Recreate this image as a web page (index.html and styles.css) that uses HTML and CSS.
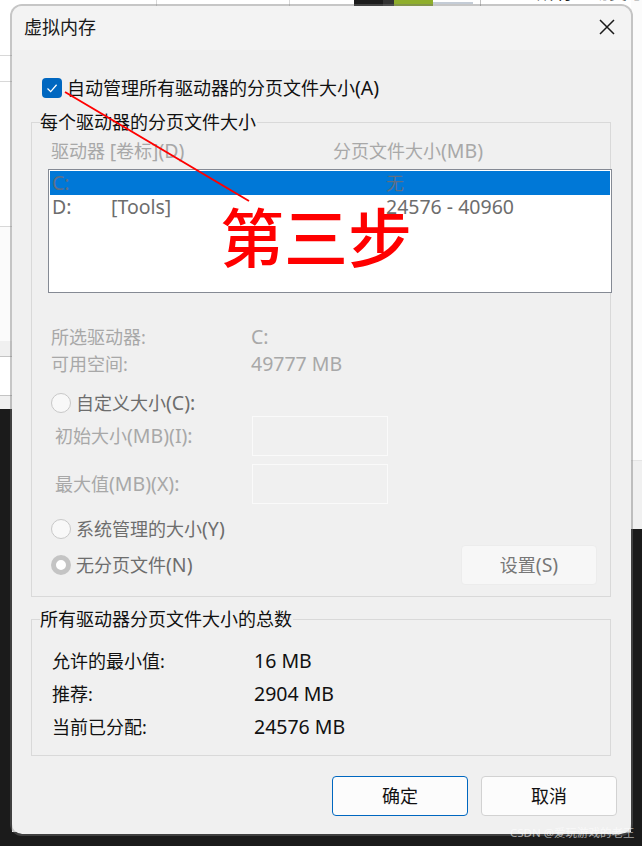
FILE: index.html
```html
<!DOCTYPE html>
<html lang="zh-CN">
<head>
<meta charset="utf-8">
<title>虚拟内存</title>
<link rel="stylesheet" href="styles.css">
</head>
<body>
<div class="desktop">
  <div class="bg left-light"></div>
  <div class="bg left-band1"></div>
  <div class="bg left-band2"></div>
  <div class="bg line-h l55"></div>
  <div class="bg line-h l81"></div>
  <div class="bg line-h l226"></div>
  <div class="bg line-h l356"></div>
  <div class="bg line-h l395"></div>
  <div class="bg line-v v156"></div>
  <div class="bg line-v v289"></div>
  <div class="bg line-v v480"></div>
  <div class="bg thumb-a"></div>
  <div class="bg thumb-b"></div>
  <div class="bg thumb-c"></div>
  <div class="bg thumb-d"></div>
  <div class="bg right-band"></div>
  <div class="bg dark-left"></div>
  <div class="bg dark-right"></div>
  <div class="bg dark-bottom"></div>
  <div class="bg top-text">所有驱动类总</div>

  <section class="window">
    <header class="titlebar">
      <span class="title">虚拟内存</span>
      <svg class="close" viewBox="0 0 16 16" width="16" height="16"><path d="M1 1L15 15M15 1L1 15"/></svg>
    </header>
    <div class="content">
      <div class="auto-row">
        <span class="checkbox"><svg viewBox="0 0 20 20" width="20" height="20"><path d="M5.5 10.5L8.7 13.6L14.6 6.8"/></svg></span>
        <span class="auto-label">自动管理所有驱动器的分页文件大小<span class="lat">(A)</span></span>
      </div>

      <div class="group group-drives">
        <span class="legend">每个驱动器的分页文件大小</span>
        <div class="list-head dim">
          <span class="col-drive">驱动器 <span class="lat">[</span>卷标<span class="lat">](D)</span></span>
          <span>分页文件大小<span class="lat">(MB)</span></span>
        </div>
        <div class="listbox">
          <div class="list-row selected"><span class="c1 lat">C:</span><span class="c2"></span><span>无</span></div>
          <div class="list-row"><span class="c1 lat">D:</span><span class="c2 lat">[Tools]</span><span class="lat">24576 - 40960</span></div>
        </div>
        <div class="info-row dim first"><span class="info-key">所选驱动器:</span><span class="lat">C:</span></div>
        <div class="info-row dim second"><span class="info-key">可用空间:</span><span class="lat">49777 MB</span></div>
        <div class="radio-row custom"><span class="radio"></span><span>自定义大小<span class="lat">(C):</span></span></div>
        <div class="input-row one dim"><span class="input-key">初始大小<span class="lat">(MB)(I):</span></span><span class="input"></span></div>
        <div class="input-row two dim"><span class="input-key">最大值<span class="lat">(MB)(X):</span></span><span class="input"></span></div>
        <div class="radio-row system"><span class="radio"></span><span>系统管理的大小<span class="lat">(Y)</span></span></div>
        <div class="radio-row none">
          <span class="radio on"></span><span>无分页文件<span class="lat">(N)</span></span>
          <span class="btn btn-set"><span>设置<span class="lat">(S)</span></span></span>
        </div>
      </div>

      <div class="group group-total">
        <span class="legend">所有驱动器分页文件大小的总数</span>
        <div class="total-row"><span class="total-key">允许的最小值:</span><span class="lat">16 MB</span></div>
        <div class="total-row"><span class="total-key">推荐:</span><span class="lat">2904 MB</span></div>
        <div class="total-row"><span class="total-key">当前已分配:</span><span class="lat">24576 MB</span></div>
      </div>

      <div class="actions">
        <span class="btn btn-main default">确定</span>
        <span class="btn btn-main">取消</span>
      </div>
    </div>
  </section>

  <svg class="annotation" viewBox="0 0 642 846" width="642" height="846"><line x1="65" y1="92" x2="249" y2="201"/></svg>
  <div class="step">第三步</div>
  <div class="watermark">CSDN @爱玩游戏的老王</div>
</div>
</body>
</html>
```

FILE: styles.css
```css
* { box-sizing: border-box; }
html, body { margin: 0; padding: 0; }
body {
  width: 642px;
  height: 846px;
  overflow: hidden;
  background: #fff;
  font-family: "Noto Sans", "Noto Sans CJK SC", sans-serif;
  font-size: 18px;
  color: #111;
}
.desktop { position: relative; width: 642px; height: 846px; overflow: hidden; background: #fff; }
.lat { font-size: 19.5px; line-height: 1; }

/* what shows behind the window */
.bg { position: absolute; }
.left-light { left: 0; top: 226px; width: 12px; height: 115px; background: #fbfbfb; }
.left-band1 { left: 0; top: 341px; width: 12px; height: 15px; background: #f0f0f0; }
.left-band2 { left: 0; top: 395px; width: 12px; height: 14px; background: #f0f0f0; }
.line-h { left: 0; width: 12px; height: 1px; background: #d8d8d8; }
.l55 { top: 55px; }
.l81 { top: 81px; }
.l226 { top: 226px; }
.l356 { top: 356px; background: #c4c4c4; }
.l395 { top: 395px; background: #c4c4c4; }
.line-v { top: 0; width: 1px; height: 6px; background: #d8d8d8; }
.v156 { left: 156px; }
.v289 { left: 289px; }
.v480 { left: 480px; background: #c0c0c0; }
.thumb-a { left: 354px; top: 0; width: 29px; height: 6px; background: #1c1c1c; }
.thumb-b { left: 383px; top: 0; width: 11px; height: 6px; background: #333; }
.thumb-c { left: 394px; top: 0; width: 39px; height: 6px; background: #8fae2c; }
.thumb-d { left: 433px; top: 2px; width: 40px; height: 2px; background: #c4ccd6; }
.right-band { left: 631px; top: 0; width: 11px; height: 461px; background: #fbfbfb; border-bottom: 1px solid #e4e4e4; }
.right-band::after { content: ""; position: absolute; left: 0; top: 461px; width: 11px; height: 68px; background: #f0f0f0; }
.dark-left { left: 0; top: 409px; width: 12px; height: 437px; background: #1b1b1b; }
.dark-right { left: 631px; top: 529px; width: 11px; height: 317px; background: #1b1b1b; }
.dark-bottom { left: 0; top: 832px; width: 642px; height: 14px; background: #1b1b1b; }
.top-text { left: 537px; top: -21px; width: 105px; height: 27px; line-height: 27px; overflow: hidden; white-space: nowrap; color: #222; }

/* the dialog */
.window {
  position: absolute;
  left: 10px;
  top: 4px;
  width: 623px;
  height: 832px;
  border: 2px solid rgba(118, 118, 118, 0.415);
  border-radius: 12px;
  background: #f0f0f0;
  background-clip: padding-box;
  overflow: hidden;
}
.titlebar {
  display: flex;
  align-items: center;
  justify-content: space-between;
  height: 44px;
  padding: 0 16px 2px 12px;
  background: #f3f3f3;
}
.title { font-size: 18px; line-height: 24px; color: #1a1a1a; }
.close { display: block; }
.close path { fill: none; stroke: #1a1a1a; stroke-width: 1.5; }
.content { padding: 0 20px 0 19px; }

.auto-row { display: flex; align-items: center; height: 24px; margin-top: 26px; margin-left: 11px; }
.checkbox {
  display: block;
  width: 20px;
  height: 20px;
  border-radius: 4px;
  background: #0067c0;
  margin-right: 5px;
}
.checkbox svg { display: block; }
.checkbox path { fill: none; stroke: #fff; stroke-width: 1.3; }
.auto-label { line-height: 24px; color: #111; }

.group { position: relative; width: 580px; border: 1px solid #d9d9d9; }
.legend {
  position: absolute;
  left: 8px;
  top: -13px;
  line-height: 24px;
  padding: 0 1px 0 0;
  background: #f0f0f0;
  color: #111;
}
.group-drives { height: 475px; margin-top: 22px; padding-top: 16px; }
.dim { color: #a8a8a8; }
.list-head { display: flex; height: 24px; line-height: 24px; padding-left: 19px; }
.col-drive { width: 282px; }
.listbox {
  width: 564px;
  height: 124px;
  margin: 6px 0 0 16px;
  padding: 1px;
  border: 1px solid #858a94;
  background: #fff;
  color: #6d6d6d;
}
.list-row { display: flex; height: 24px; line-height: 24px; padding-left: 2px; }
.list-row .lat { line-height: 24px; }
.selected { background: #0078d7; color: #5f6f85; }
.c1 { width: 59px; }
.c2 { width: 275px; }

.info-row { display: flex; height: 24px; line-height: 24px; padding-left: 19px; }
.info-row > .lat, .total-row > .lat { line-height: 24px; }
.info-row.first { margin-top: 32px; }
.info-row.second { margin-top: 3px; }
.info-key { width: 200px; }

.radio-row { display: flex; align-items: center; height: 24px; padding-left: 19px; color: #6d6d6d; line-height: 24px; }
.radio {
  display: block;
  flex: none;
  width: 20px;
  height: 20px;
  margin-right: 5px;
  border: 1px solid #c8c8c8;
  border-radius: 50%;
  background: #f8f8f8;
}
.radio.on { border: 5.5px solid #c4c4c4; background: #fff; }
.radio-row.custom { margin-top: 15px; }
.radio-row.system { margin-top: 13px; }
.radio-row.none { height: 40px; margin-top: 4px; }

.input-row { display: flex; align-items: center; height: 40px; padding-left: 23px; }
.input-row.one { margin-top: 1px; }
.input-row.two { margin-top: 8px; }
.input-key { width: 197px; margin-bottom: 2px; white-space: nowrap; }
.input { display: block; width: 136px; height: 40px; border: 1px solid #fafafa; }

.btn {
  display: flex;
  align-items: center;
  justify-content: center;
  width: 136px;
  height: 40px;
  border-radius: 4px;
}
.btn-set {
  margin-left: auto;
  margin-right: 13px;
  background: #f7f7f7;
  border: 1px solid #ececec;
  color: #777;
}

.group-total { height: 137px; margin-top: 22px; padding-top: 29px; }
.total-row { display: flex; height: 33px; line-height: 24px; padding: 0 0 0 20px; color: #111; }
.total-key { width: 202px; }

.actions { display: flex; gap: 13px; justify-content: flex-end; margin-top: 20px; margin-right: -6px; }
.btn-main { background: #fcfcfc; border: 1px solid #d2d2d2; color: #111; padding-bottom: 2px; }
.btn-main.default { border-color: #0067c0; }

/* markup over the screenshot */
.annotation { position: absolute; left: 0; top: 0; pointer-events: none; }
.annotation line { stroke: #f00; stroke-width: 2; }
.step {
  position: absolute;
  left: 220px;
  top: 190px;
  font-size: 64px;
  font-weight: 500;
  line-height: 96px;
  color: #f00;
  white-space: nowrap;
}
.watermark {
  position: absolute;
  left: 510px;
  top: 825px;
  font-size: 11.5px;
  line-height: 16px;
  color: rgba(255, 255, 255, 0.62);
  white-space: nowrap;
}
```
